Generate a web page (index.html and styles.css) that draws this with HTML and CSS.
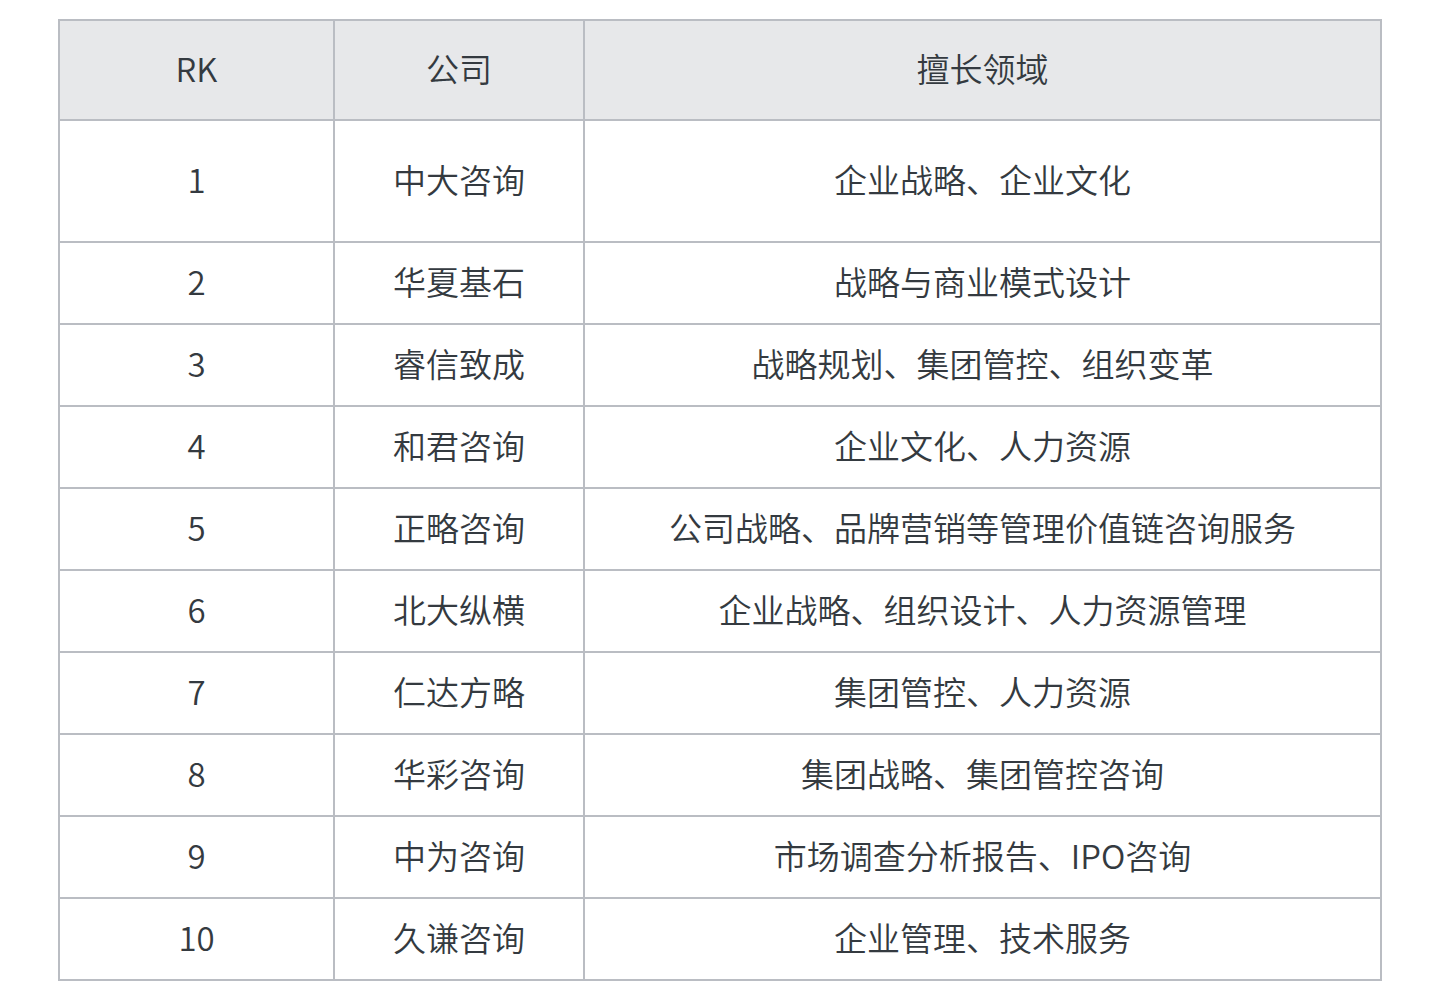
FILE: index.html
```html
<!DOCTYPE html>
<html lang="zh-CN">
<head>
<meta charset="utf-8">
<title>咨询公司排名</title>
<link rel="stylesheet" href="styles.css">
</head>
<body>
<table class="rank-table">
  <colgroup>
    <col class="col-rk">
    <col class="col-co">
    <col class="col-field">
  </colgroup>
  <thead>
    <tr class="head-row"><th>RK</th><th>公司</th><th>擅长领域</th></tr>
  </thead>
  <tbody>
    <tr class="first-row"><td>1</td><td>中大咨询</td><td>企业战略、企业文化</td></tr>
    <tr><td>2</td><td>华夏基石</td><td>战略与商业模式设计</td></tr>
    <tr><td>3</td><td>睿信致成</td><td>战略规划、集团管控、组织变革</td></tr>
    <tr><td>4</td><td>和君咨询</td><td>企业文化、人力资源</td></tr>
    <tr><td>5</td><td>正略咨询</td><td>公司战略、品牌营销等管理价值链咨询服务</td></tr>
    <tr><td>6</td><td>北大纵横</td><td>企业战略、组织设计、人力资源管理</td></tr>
    <tr><td>7</td><td>仁达方略</td><td>集团管控、人力资源</td></tr>
    <tr><td>8</td><td>华彩咨询</td><td>集团战略、集团管控咨询</td></tr>
    <tr><td>9</td><td>中为咨询</td><td>市场调查分析报告、IPO咨询</td></tr>
    <tr><td>10</td><td>久谦咨询</td><td>企业管理、技术服务</td></tr>
  </tbody>
</table>
</body>
</html>
```
FILE: styles.css
```css
html, body {
  margin: 0;
  padding: 0;
  background: #ffffff;
}
body {
  font-family: "Noto Sans CJK SC", "Noto Sans", sans-serif;
  color: #343a40;
  padding: 19px 0 0 58px;
}
.rank-table {
  border-collapse: separate;
  border-spacing: 0;
  table-layout: fixed;
  width: 1324px;
  border-left: 2px solid #babdc3;
  border-top: 2px solid #babdc3;
  font-size: 33px;
}
.col-rk { width: 275px; }
.col-co { width: 250px; }
.col-field { width: 797px; }
.rank-table th,
.rank-table td {
  box-sizing: border-box;
  border-right: 2px solid #babdc3;
  border-bottom: 2px solid #babdc3;
  text-align: center;
  vertical-align: middle;
  padding: 0 0 3px;
  font-weight: 350;
  line-height: 1.2;
  white-space: nowrap;
}
.rank-table tr { height: 82px; }
.rank-table .head-row { height: 100px; }
.rank-table .head-row th { background: #e7e8ea; }
.rank-table .first-row { height: 122px; }
```
